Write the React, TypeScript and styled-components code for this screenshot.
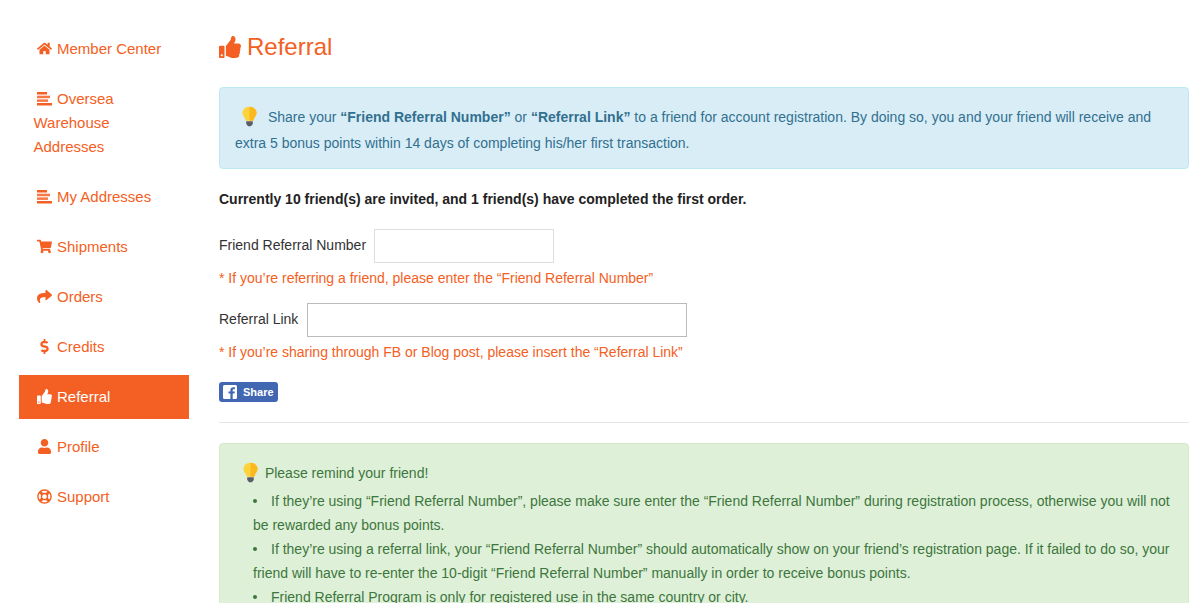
import styled, { createGlobalStyle } from "styled-components";
import { ReactNode } from "react";
import {
  FaDollarSign,
  FaHome,
  FaRegLifeRing,
  FaShare,
  FaShoppingCart,
  FaThumbsUp,
  FaUser,
} from "react-icons/fa";

const orange = "#f46023";

const GlobalStyle = createGlobalStyle`
  html, body {
    margin: 0;
    height: 603px;
    overflow: hidden;
    background: #fff;
  }
  body {
    font-family: "Liberation Sans", Arial, sans-serif;
    font-size: 14px;
    color: #333;
  }
`;

const Page = styled.div`
  display: flex;
  width: 1197px;
  padding: 27px 8px 0 19px;
  box-sizing: border-box;
`;

const Side = styled.ul`
  list-style: none;
  margin: 0 30px 0 0;
  padding: 0;
  width: 170px;
  flex: none;
`;

const SideItem = styled.li<{ $active?: boolean }>`
  padding: 10px 15px 10px 14.5px;
  margin-bottom: 6px;
  line-height: 24px;
  font-size: 15px;
  color: ${(p) => (p.$active ? "#fff" : orange)};
  background: ${(p) => (p.$active ? orange : "transparent")};
`;

const SideIcon = styled.span`
  display: inline-flex;
  justify-content: center;
  width: 17px;
  margin: 0 4px 0 2.5px;
  vertical-align: -2px;
  font-size: 15px;
`;

const Main = styled.div`
  flex: 1;
  min-width: 0;
`;

const Title = styled.h1`
  display: flex;
  align-items: center;
  gap: 6px;
  margin: 3px 0 24px 0;
  height: 33px;
  font-size: 24px;
  font-weight: 400;
  color: ${orange};
`;

const Alert = styled.div<{ $tone: "info" | "success" }>`
  padding: 16px 15px 12px;
  border: 1px solid ${(p) => (p.$tone === "info" ? "#bce8f1" : "#d6e9c6")};
  border-radius: 4px;
  background: ${(p) => (p.$tone === "info" ? "#d9edf7" : "#dff0d8")};
  color: ${(p) => (p.$tone === "info" ? "#31708f" : "#3c763d")};
  line-height: 26px;
`;

const Bulb = styled.svg<{ $left: number; $right: number }>`
  width: 15px;
  height: 21px;
  margin: 0 ${(p) => p.$right}px 0 ${(p) => p.$left}px;
  vertical-align: -5px;
`;

const Invited = styled.p`
  margin: 20px 0;
  line-height: 20px;
  font-weight: 700;
  color: #222;
`;

const Field = styled.div<{ $gap: number }>`
  display: flex;
  align-items: center;
  gap: ${(p) => p.$gap}px;
`;

const FieldLabel = styled.span`
  padding-bottom: 2px;
`;

const FieldInput = styled.input<{ $w: number; $dark?: boolean }>`
  width: ${(p) => p.$w}px;
  height: 34px;
  box-sizing: border-box;
  border: 1px solid ${(p) => (p.$dark ? "#bbb" : "#ddd")};
  background: #fff;
`;

const Hint = styled.p`
  margin: 5px 0 15px;
  line-height: 20px;
  color: ${orange};
`;

const ShareButton = styled.div`
  display: flex;
  align-items: center;
  gap: 6px;
  width: 59px;
  height: 20px;
  margin-top: 20px;
  padding-left: 4px;
  box-sizing: border-box;
  border-radius: 3px;
  background: #4267b2;
  color: #fff;
  font-size: 11px;
  font-weight: 700;
`;

const Rule = styled.hr`
  margin: 20px 0;
  border: 0;
  border-top: 1px solid #e5e5e5;
`;

const RemindList = styled.ul`
  margin: 3px 0 0;
  padding: 0 0 0 18px;
  list-style: none;
  line-height: 24px;
`;

const RemindItem = styled.li`
  position: relative;
  text-indent: 18px;
  &::before {
    content: "";
    position: absolute;
    left: 0;
    top: 10px;
    width: 4px;
    height: 4px;
    border-radius: 50%;
    background: #3c763d;
  }
`;

const BulbIcon = ({ left, right }: { left: number; right: number }) => (
  <Bulb viewBox="0 0 16 21" $left={left} $right={right}>
    <path
      d="M8 0C3.600 0 .5 3 .5 6.800c0 3.200 2.900 4.800 3.500 8.200h8c.6-3.400 3.500-5 3.500-8.200C15.500 3 12.400 0 8 0z"
      fill="#fdd33c"
    />
    <path d="M8 0c4.400 0 7.500 3 7.500 6.800 0 3.200-2.900 4.800-3.500 8.200H8z" fill="#fbb81f" />
    <path d="M4.500 15.500h7v3l-2 2.500h-3l-2-2.500z" fill="#5b5e66" />
  </Bulb>
);

const FacebookMark = () => (
  <svg width="14" height="14" viewBox="0 0 14 14">
    <rect width="14" height="14" rx="1.500" fill="#fff" />
    <path
      d="M9.700 14V8.600h1.800l.3-2.100H9.700V5.200c0-.6.200-1 1-1h1.200V2.300c-.2 0-.9-.1-1.700-.1-1.700 0-2.800 1-2.800 2.800v1.500H5.500v2.100h1.900V14z"
      fill="#4267b2"
    />
  </svg>
);

const BarsIcon = () => (
  <svg width="15" height="14" viewBox="0 0 15 14" fill="currentColor">
    <rect width="10" height="2.500" y="0" />
    <rect width="13" height="2.500" y="3.700" opacity="0.85" />
    <rect width="11" height="2.500" y="7.400" opacity="0.85" />
    <rect width="15" height="2.500" y="11" />
  </svg>
);

const menu: { label: string; icon: ReactNode; active?: boolean }[] = [
  { label: "Member Center", icon: <FaHome /> },
  { label: "Oversea Warehouse Addresses", icon: <BarsIcon /> },
  { label: "My Addresses", icon: <BarsIcon /> },
  { label: "Shipments", icon: <FaShoppingCart /> },
  { label: "Orders", icon: <FaShare /> },
  { label: "Credits", icon: <FaDollarSign /> },
  { label: "Referral", icon: <FaThumbsUp />, active: true },
  { label: "Profile", icon: <FaUser /> },
  { label: "Support", icon: <FaRegLifeRing /> },
];

const App = () => {
  return (
    <Page>
      <GlobalStyle />
      <Side>
        {menu.map((item) => (
          <SideItem key={item.label} $active={item.active}>
            <SideIcon>{item.icon}</SideIcon>
            {item.label}
          </SideItem>
        ))}
      </Side>
      <Main>
        <Title>
          <FaThumbsUp size={22} />
          Referral
        </Title>
        <Alert $tone="info">
          <BulbIcon left={7} right={7} /> Share your{" "}
          <b>“Friend Referral Number”</b> or <b>“Referral Link”</b> to a friend
          for account registration. By doing so, you and your friend will
          receive and extra 5 bonus points within 14 days of completing his/her
          first transaction.
        </Alert>
        <Invited>
          Currently 10 friend(s) are invited, and 1 friend(s) have completed the
          first order.
        </Invited>
        <Field $gap={8}>
          <FieldLabel>Friend Referral Number</FieldLabel>
          <FieldInput $w={180} />
        </Field>
        <Hint>* If you’re referring a friend, please enter the “Friend Referral Number”</Hint>
        <Field $gap={9}>
          <FieldLabel>Referral Link</FieldLabel>
          <FieldInput $w={380} $dark />
        </Field>
        <Hint>* If you’re sharing through FB or Blog post, please insert the “Referral Link”</Hint>
        <ShareButton>
          <FacebookMark />
          Share
        </ShareButton>
        <Rule />
        <Alert $tone="success">
          <BulbIcon left={8} right={3} /> Please remind your friend!
          <RemindList>
            <RemindItem>
              If they’re using “Friend Referral Number”, please make sure enter
              the “Friend Referral Number” during registration process, otherwise
              you will not be rewarded any bonus points.
            </RemindItem>
            <RemindItem>
              If they’re using a referral link, your “Friend Referral Number”
              should automatically show on your friend’s registration page. If it
              failed to do so, your friend will have to re-enter the 10-digit
              “Friend Referral Number” manually in order to receive bonus points.
            </RemindItem>
            <RemindItem>
              Friend Referral Program is only for registered use in the same
              country or city.
            </RemindItem>
          </RemindList>
        </Alert>
      </Main>
    </Page>
  );
};

export default App;
